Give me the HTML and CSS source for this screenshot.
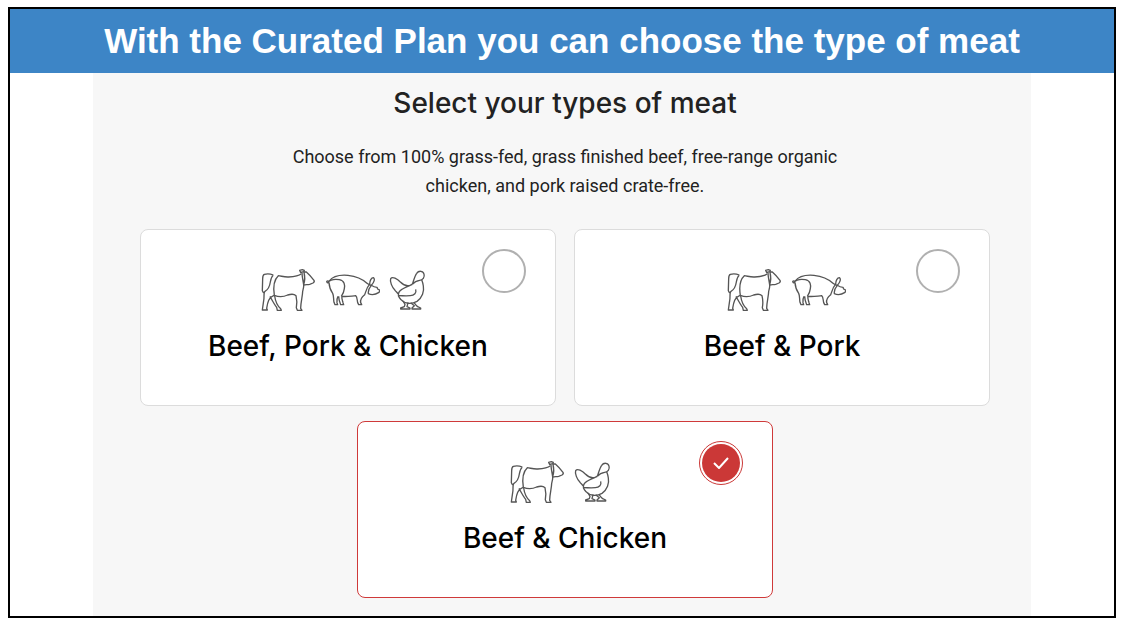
FILE: index.html
```
<!DOCTYPE html>
<html lang="en">

<head>
    <meta charset="UTF-8">
    <meta name="viewport" content="width=device-width, initial-scale=1.0">
    <title>Select your types of meat</title>
    <link rel="stylesheet" href="styles.css">
</head>

<body>
    <!-- Animal icons, shared by the cards -->
    <svg class="sprite" aria-hidden="true">
        <symbol id="cow" viewBox="-4 18 192 144">
            <path d="M60 45C50 41 40 41 33 43C28 45 28 50 28 56L27 92C29 99 33 99 35 94C44 89 49 80 51 66C53 56 54 50 60 45" />
            <path d="M33 96C31 106 33 114 31 122L27 150H42L40 145C43 126 46 112 62 106M50 109C56 120 62 132 70 142L72 151H84L82 146C70 136 66 122 64 108" />
            <path d="M144 41C136 48 122 50 106 51C94 52 84 48 75 47C63 58 59 80 63 106C78 112 92 110 103 105C113 102 124 103 128 107C132 124 130 138 129 143L132 151H146L142 145C142 126 148 108 148 94C150 86 152 80 151 74" />
            <path d="M151 35L142 37L139 31L147 29L153 31L151 36L159 36C166 42 175 52 182 61C184 64 182 67 179 69L169 73C164 74 158 74 151 75C150 64 146 52 146 38M152 37C155 48 156 58 151 74" />
        </symbol>
        <symbol id="pig" viewBox="-12 18 192 144">
            <path d="M27 64C21 61 18 65 22 68C26 70 28 65 25 63M24 67C30 60 44 57 58 59C74 62 75 76 73 86C72 96 69 102 64 109" />
            <path d="M28 63C38 49 60 44 84 46C108 49 126 56 140 69C144 73 150 74 154 77" />
            <path d="M27 68C28 82 32 92 38 100C42 108 40 118 42 127L45 134H53L51 128C50 120 51 114 54 109M56 109C56 120 59 127 62 134H71L69 128C67 120 64 114 66 109C80 111 94 108 107 107C112 110 111 120 113 128L116 134H125L122 128C120 116 126 110 134 104C138 96 139 84 148 74" />
            <path d="M149 72C149 62 154 53 160 53C166 56 162 68 154 76C162 82 168 82 171 82L173 87L180 91L177 97C168 103 154 105 145 101C144 92 147 84 154 76" />
        </symbol>
        <symbol id="chicken" viewBox="177 18 192 144">
            <path d="M274 73C278 62 281 48 287 40C293 31 307 32 309 42C312 52 305 60 296 61C287 62 280 66 274 73" />
            <path d="M274 73C262 80 248 76 238 66C229 56 214 48 209 56C206 64 213 82 222 91C226 96 230 99 233 104M273 73C262 80 242 85 235 95C229 104 233 112 240 119C252 132 272 133 288 124C304 113 310 94 307 78C306 69 304 64 302 59" />
            <path d="M284 88C287 98 280 107 268 107C256 108 244 107 233 107" />
            <path d="M246 123L252 133L250 140L239 144V147H267V144L258 140L261 128M269 128L280 137L273 144V147H299V144L290 140L284 134L279 128" />
        </symbol>
    </svg>

    <div class="slide">
        <h1 class="banner">With the Curated Plan you can choose the type of meat</h1>

        <form class="panel">
            <h2 class="title">Select your types of meat</h2>
            <p class="intro">Choose from 100% grass-fed, grass finished beef, free-range organic chicken, and pork raised crate-free.</p>

            <div class="cards">
                <label class="card" for="beef-pork-chicken">
                    <input type="radio" id="beef-pork-chicken" name="meat" value="beef-pork-chicken">
                    <span class="icons">
                        <svg class="icon"><use href="#cow" /></svg>
                        <svg class="icon"><use href="#pig" /></svg>
                        <svg class="icon"><use href="#chicken" /></svg>
                    </span>
                    <span class="name">Beef, Pork &amp; Chicken</span>
                </label>

                <label class="card" for="beef-pork">
                    <input type="radio" id="beef-pork" name="meat" value="beef-pork">
                    <span class="icons">
                        <svg class="icon"><use href="#cow" /></svg>
                        <svg class="icon"><use href="#pig" /></svg>
                    </span>
                    <span class="name">Beef &amp; Pork</span>
                </label>

                <label class="card" for="beef-chicken">
                    <input type="radio" id="beef-chicken" name="meat" value="beef-chicken" checked>
                    <svg class="check" viewBox="0 0 16 12"><path d="M1 6L6 11L15 1" /></svg>
                    <span class="icons">
                        <svg class="icon"><use href="#cow" /></svg>
                        <svg class="icon"><use href="#chicken" /></svg>
                    </span>
                    <span class="name">Beef &amp; Chicken</span>
                </label>
            </div>
        </form>
    </div>
</body>

</html>
```
FILE: styles.css
```
* {
    box-sizing: border-box;
}

body {
    margin: 0;
    padding: 7px 8px;
    background: #fff;
    color: #222;
}

.sprite {
    display: none;
}

.slide {
    border: 2px solid #000;
}

.banner {
    margin: 0;
    padding: 12px 20px;
    background: #3d85c6;
    color: #fff;
    font-family: "Liberation Sans", Arial, sans-serif;
    font-size: 35px;
    line-height: 40px;
    text-align: center;
}

.panel {
    width: 85%;
    margin: 0 auto;
    padding: 13px 41px 18px 47px;
    background: #f7f7f7;
}

.title {
    margin: 0;
    font-family: Inter, sans-serif;
    font-size: 28px;
    font-weight: 500;
    line-height: 34px;
    text-align: center;
}

.intro {
    max-width: 580px;
    margin: 22px auto 29px;
    font-family: Roboto, sans-serif;
    font-size: 18px;
    line-height: 29px;
    text-align: center;
}

.cards {
    display: flex;
    flex-wrap: wrap;
    justify-content: center;
    gap: 15px 18px;
}

.card {
    position: relative;
    display: flex;
    flex: 0 0 calc(50% - 9px);
    flex-direction: column;
    align-items: center;
    padding: 36px 20px 42px;
    border: 1px solid #dcdcdc;
    border-radius: 8px;
    background: #fff;
    cursor: pointer;
}

.card:has(input:checked) {
    border-color: #cf3a3a;
}

.card input {
    position: absolute;
    top: 19px;
    right: 29px;
    width: 44px;
    height: 44px;
    margin: 0;
    border: 2px solid #b0b0b0;
    border-radius: 50%;
    background: #fff;
    appearance: none;
    cursor: pointer;
}

.card input:checked {
    padding: 2px;
    border: 1px solid #cb3837;
    background: #cb3837 content-box;
}

.check {
    position: absolute;
    top: 35px;
    right: 43px;
    width: 16px;
    height: 12px;
    fill: none;
    stroke: #fff;
    stroke-width: 2;
    pointer-events: none;
}

.icons {
    display: flex;
}

.icon {
    width: 64px;
    height: 48px;
    fill: none;
    stroke: #555;
    stroke-width: 4;
    stroke-linejoin: round;
}

.name {
    margin-top: 15px;
    color: #000;
    font-family: Inter, sans-serif;
    font-size: 28px;
    font-weight: 500;
    line-height: 34px;
}
```
